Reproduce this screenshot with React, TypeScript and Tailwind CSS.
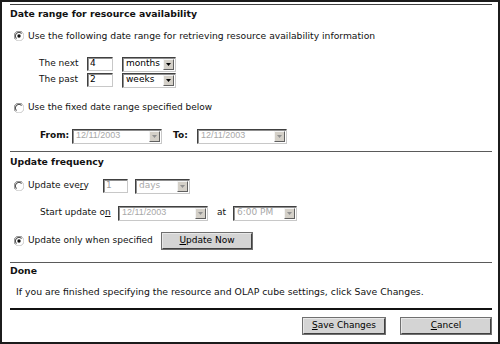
import React from "react";

const font = { fontFamily: '"DejaVu Sans", Verdana, sans-serif' };

function Radio({ checked }: { checked?: boolean }) {
  return (
    <svg width="10" height="10" viewBox="0 0 10 10" className="shrink-0">
      <path d="M8.5 1.5 A4.5 4.5 0 0 0 1.5 8.5" fill="none" stroke="#808080" strokeWidth="1" />
      <path d="M1.5 8.5 A4.5 4.5 0 0 0 8.5 1.5" fill="none" stroke="#c8c8c8" strokeWidth="1" />
      <circle cx="5" cy="5" r="3.6" fill="white" />
      <path d="M7.6 2.4 A3.6 3.6 0 0 0 2.4 7.6" fill="none" stroke="#333" strokeWidth="1" />
      {checked && <circle cx="5" cy="5" r="1.7" fill="#111" />}
    </svg>
  );
}

function Arrow({ disabled }: { disabled?: boolean }) {
  return (
    <div className="w-[11px] h-[11px] bg-[#d4d0c8] border border-t-[#f4f4f4] border-l-[#f4f4f4] border-r-[#606060] border-b-[#606060] flex items-center justify-center shrink-0">
      <svg width="5" height="3" viewBox="0 0 5 3">
        <path d="M0 0 H5 L2.5 3 Z" fill={disabled ? "#909090" : "#000"} />
      </svg>
    </div>
  );
}

function TextBox({ value, w, disabled }: { value: string; w: string; disabled?: boolean }) {
  return (
    <div
      className={`${w} h-[14px] bg-white border border-t-[#404040] border-l-[#404040] border-r-[#c8c8c8] border-b-[#c8c8c8] shadow-[inset_1px_1px_0_#909090] flex items-center pl-[2px] text-[9px] ${disabled ? "text-[#a0a0a0]" : "text-black"}`}
    >
      {value}
    </div>
  );
}

function Combo({ value, w, disabled, thin }: { value: string; w: string; disabled?: boolean; thin?: boolean }) {
  return (
    <div
      className={`${w} h-[15px] bg-white border border-t-[#404040] border-l-[#404040] border-r-[#c8c8c8] border-b-[#c8c8c8] shadow-[inset_1px_1px_0_#909090] flex items-center justify-between pl-[3px] pr-[1px] ${disabled ? "text-[#a8a8a8]" : "text-black"}`}
    >
      <span className="text-[9px] whitespace-nowrap" style={thin ? { fontFamily: '"Liberation Sans", Arial, sans-serif' } : undefined}>
        {value}
      </span>
      <Arrow disabled={disabled} />
    </div>
  );
}

function Button({ children, w }: { children: React.ReactNode; w: string }) {
  return (
    <div className={`${w} h-[16px] bg-[#d4d4d4] border border-t-[#e8e8e8] border-l-[#e8e8e8] border-r-[#404040] border-b-[#404040] shadow-[0_0_0_1px_#707070] flex items-center justify-center text-[9px] text-black whitespace-nowrap`}>
      {children}
    </div>
  );
}

export default function App() {
  return (
    <div
      className="w-[500px] h-[344px] bg-white border-2 border-[#1c1c1c] text-[9px] text-[#111] flex flex-col pl-[8px] pr-[6px] overflow-hidden whitespace-nowrap"
      style={font}
    >
      <div className="h-[2px]" />
      <div className="h-px bg-[#404040]" />
      <div className="h-[17px] flex items-center font-bold text-[9.3px]">Date range for resource availability</div>

      <div className="mt-[6px] h-[16px] flex items-center pl-[4px] gap-[4px] text-[9.2px]">
        <Radio checked />
        <span>Use the following date range for retrieving resource availability information</span>
      </div>

      <div className="mt-[12px] h-[16px] flex items-center pl-[29px]">
        <span className="w-[48px]">The next</span>
        <TextBox value="4" w="w-[26px]" />
        <div className="w-[9px]" />
        <Combo value="months" w="w-[54px]" />
      </div>
      <div className="h-[16px] flex items-center pl-[29px]">
        <span className="w-[48px]">The past</span>
        <TextBox value="2" w="w-[26px]" />
        <div className="w-[9px]" />
        <Combo value="weeks" w="w-[54px]" />
      </div>

      <div className="mt-[12px] h-[16px] flex items-center pl-[4px] gap-[4px]">
        <Radio />
        <span>Use the fixed date range specified below</span>
      </div>

      <div className="mt-[12px] h-[16px] flex items-center pl-[30px]">
        <span className="w-[32px] font-bold">From:</span>
        <Combo value="12/11/2003" w="w-[90px]" disabled thin />
        <span className="ml-[11px] w-[24px] font-bold">To:</span>
        <Combo value="12/11/2003" w="w-[90px]" disabled thin />
      </div>

      <div className="mt-[7px] h-px bg-[#5a5a5a]" />
      <div className="mt-[1px] h-[17px] flex items-center font-bold text-[9.3px]">Update frequency</div>

      <div className="mt-[8px] h-[16px] flex items-center pl-[4px]">
        <Radio />
        <span className="ml-[4px] w-[75px]">
          Update eve<span className="underline">r</span>y
        </span>
        <TextBox value="1" w="w-[25px]" disabled />
        <div className="w-[7px]" />
        <Combo value="days" w="w-[55px]" disabled />
      </div>

      <div className="mt-[11px] h-[16px] flex items-center pl-[30px]">
        <span className="w-[78px]">
          Start update o<span className="underline">n</span>
        </span>
        <Combo value="12/11/2003" w="w-[90px]" disabled thin />
        <span className="ml-[9px] w-[16px]">at</span>
        <Combo value="6:00 PM" w="w-[64px]" disabled />
      </div>

      <div className="mt-[12px] h-[16px] flex items-center pl-[4px]">
        <Radio checked />
        <span className="ml-[4px] w-[134px]">Update only when specified</span>
        <Button w="w-[90px]">
          <span>
            <span className="underline">U</span>pdate Now
          </span>
        </Button>
      </div>

      <div className="mt-[13px] h-px bg-[#5a5a5a]" />
      <div className="h-[15px] flex items-center font-bold text-[9.3px]">Done</div>

      <div className="mt-[6px] h-[16px] flex items-center pl-[6px] text-[9.3px]">
        If you are finished specifying the resource and OLAP cube settings, click Save Changes.
      </div>

      <div className="mt-[8px] h-[2px] bg-[#111]" />

      <div className="mt-[8px] h-[16px] flex items-center justify-end pr-[1px] gap-[16px]">
        <Button w="w-[82px]">
          <span>
            <span className="underline">S</span>ave Changes
          </span>
        </Button>
        <Button w="w-[90px]">
          <span>
            <span className="underline">C</span>ancel
          </span>
        </Button>
      </div>
    </div>
  );
}
